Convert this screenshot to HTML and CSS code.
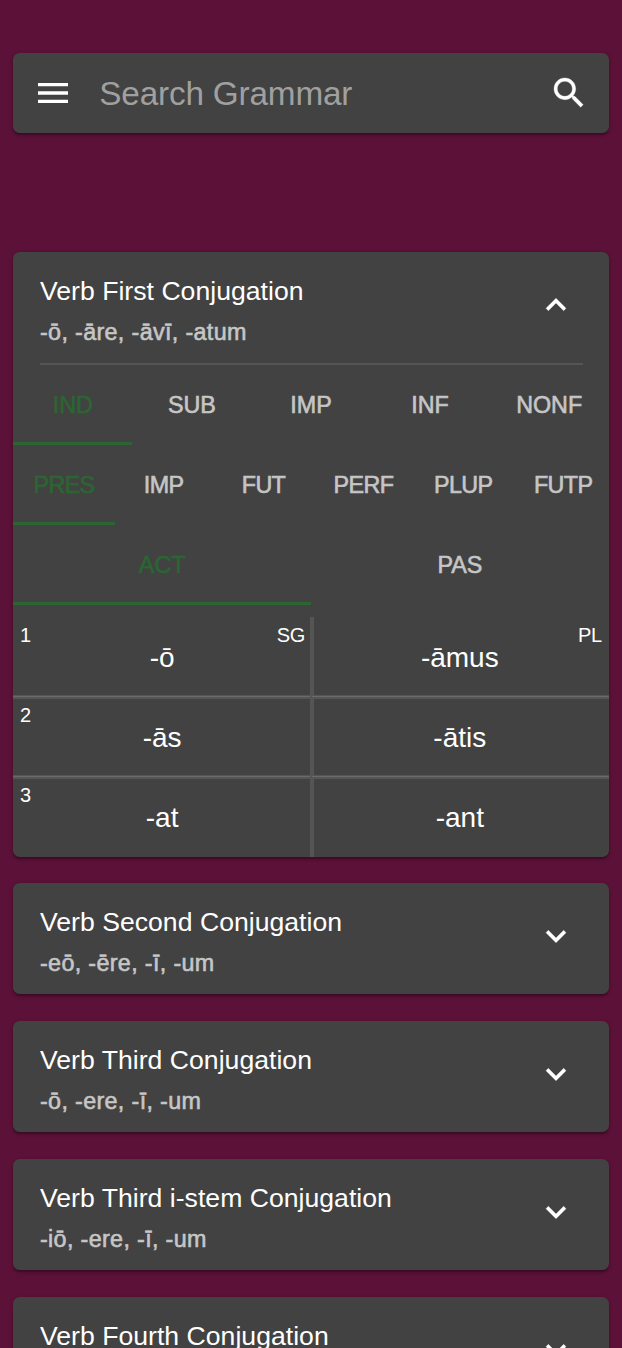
FILE: index.html
```html
<!DOCTYPE html>
<html lang="en">
<head>
<meta charset="utf-8">
<title>Grammar</title>
<link rel="stylesheet" href="styles.css">
</head>
<body>
<header class="search card">
  <svg class="icon" viewBox="0 0 24 24"><path d="M3 18h18v-2H3v2zm0-5h18v-2H3v2zm0-7v2h18V6H3z"/></svg>
  <span class="placeholder">Search Grammar</span>
  <svg class="icon bold" viewBox="0 0 24 24"><path d="M15.5 14h-.79l-.28-.27C15.41 12.59 16 11.11 16 9.5 16 5.91 13.09 3 9.5 3S3 5.91 3 9.5 5.91 16 9.5 16c1.61 0 3.09-.59 4.23-1.57l.27.28v.79l5 4.99L20.49 19l-4.99-5zm-6 0C7.01 14 5 11.99 5 9.5S7.01 5 9.5 5 14 7.01 14 9.5 11.99 14 9.5 14z"/></svg>
</header>
<main class="list">
  <section class="card open">
    <div class="head">
      <div><h2 class="title">Verb First Conjugation</h2><p class="forms">-ō, -āre, -āvī, -atum</p></div>
      <svg class="icon bold" viewBox="0 0 24 24"><path d="M12 8l-6 6 1.41 1.41L12 10.83l4.59 4.58L18 14z"/></svg>
    </div>
    <div class="divider"></div>
    <nav class="tabs"><span class="tab active">IND</span><span class="tab">SUB</span><span class="tab">IMP</span><span class="tab">INF</span><span class="tab">NONF</span></nav>
    <nav class="tabs tenses"><span class="tab active">PRES</span><span class="tab">IMP</span><span class="tab">FUT</span><span class="tab">PERF</span><span class="tab">PLUP</span><span class="tab">FUTP</span></nav>
    <nav class="tabs"><span class="tab active">ACT</span><span class="tab">PAS</span></nav>
    <div class="endings">
      <div class="cell"><span class="person">1</span><span class="number">SG</span>-ō</div>
      <div class="cell"><span class="number">PL</span>-āmus</div>
      <div class="cell"><span class="person">2</span>-ās</div>
      <div class="cell">-ātis</div>
      <div class="cell"><span class="person">3</span>-at</div>
      <div class="cell">-ant</div>
    </div>
  </section>
  <section class="card">
    <div class="head">
      <div><h2 class="title">Verb Second Conjugation</h2><p class="forms">-eō, -ēre, -ī, -um</p></div>
      <svg class="icon bold" viewBox="0 0 24 24"><path d="M16.59 8.59L12 13.17 7.41 8.59 6 10l6 6 6-6z"/></svg>
    </div>
  </section>
  <section class="card">
    <div class="head">
      <div><h2 class="title">Verb Third Conjugation</h2><p class="forms">-ō, -ere, -ī, -um</p></div>
      <svg class="icon bold" viewBox="0 0 24 24"><path d="M16.59 8.59L12 13.17 7.41 8.59 6 10l6 6 6-6z"/></svg>
    </div>
  </section>
  <section class="card">
    <div class="head">
      <div><h2 class="title">Verb Third i-stem Conjugation</h2><p class="forms">-iō, -ere, -ī, -um</p></div>
      <svg class="icon bold" viewBox="0 0 24 24"><path d="M16.59 8.59L12 13.17 7.41 8.59 6 10l6 6 6-6z"/></svg>
    </div>
  </section>
  <section class="card">
    <div class="head">
      <div><h2 class="title">Verb Fourth Conjugation</h2></div>
      <svg class="icon bold" viewBox="0 0 24 24"><path d="M16.59 8.59L12 13.17 7.41 8.59 6 10l6 6 6-6z"/></svg>
    </div>
  </section>
</main>
</body>
</html>
```
FILE: styles.css
```css
* { box-sizing: border-box; }
html { background: #5c1138; }
body {
  margin: 0;
  height: 1348px;
  overflow: hidden;
  padding: 53.3px 13.3px 0;
  background: #5c1138;
  color: #fff;
  font-family: "Liberation Sans", Arial, sans-serif;
}
.card {
  background: #424242;
  border-radius: 6.6px;
  box-shadow: 0 1.7px 4px rgba(0,0,0,.16), 0 1.7px 1.7px rgba(0,0,0,.14), 0 3.3px 1.7px -1.7px rgba(0,0,0,.12);
}
.icon { width: 40px; height: 40px; fill: #fff; flex: none; }
.icon.bold { stroke: #fff; stroke-width: .2; }
.search {
  display: flex;
  align-items: center;
  height: 79.4px;
  padding: 0 20px;
}
.placeholder {
  flex: 1;
  margin-left: 26px;
  padding-top: 3px;
  font-size: 33.3px;
  letter-spacing: -.17px;
  line-height: 40px;
  color: #a0a0a0;
}
.list {
  display: flex;
  flex-direction: column;
  gap: 27px;
  margin-top: 119.6px;
}
.list .card { flex: none; }
.list .open { margin-bottom: -1px; overflow: hidden; }
.head {
  display: flex;
  justify-content: space-between;
  height: 110.8px;
  padding: 20px 33px 0 26.7px;
}
.head .icon { margin-top: 13px; }
.title {
  margin: 0;
  font-size: 26.6px;
  font-weight: 400;
  letter-spacing: .02px;
  line-height: 38px;
}
.forms {
  margin: 5px 0 0;
  font-size: 23.3px;
  letter-spacing: .35px;
  line-height: 35px;
  color: #c6c6c6;
  -webkit-text-stroke: .6px currentColor;
}
.divider { height: 1.7px; margin: 0 26.2px 0 26.6px; background: #555; }
.tabs { display: flex; height: 80px; }
.tab {
  flex: 1 1 0;
  display: flex;
  align-items: center;
  justify-content: center;
  font-size: 23.3px;
  color: #c6c6c6;
  border-bottom: 3.4px solid transparent;
  padding-top: 5px;
  -webkit-text-stroke: .6px currentColor;
}
.tab.active { color: #2b6632; border-color: #2b6632; }
.tenses .tab { flex: none; width: 99.9px; letter-spacing: -.6px; }
.tenses .tab.active { width: 101.4px; }
.tenses .tab:not(.active) { padding-right: 2px; }
.endings {
  display: grid;
  grid-template-columns: 298.6px 1fr;
  grid-auto-rows: 80px;
  margin-top: 12.4px;
}
.cell {
  position: relative;
  display: flex;
  align-items: center;
  justify-content: center;
  padding: 2px 1px 0 0;
  font-size: 28px;
}
/* Row rule: a light centre between two dimmer edges. */
.cell:nth-child(-n+4)::after {
  content: "";
  position: absolute;
  left: 0;
  right: 0;
  bottom: -1.8px;
  height: 4px;
  background: linear-gradient(#555 1px, #6b6b6b 1px, #6b6b6b 2px, #555 2px);
}
.cell:nth-child(even)::before {
  content: "";
  position: absolute;
  left: -2px;
  top: 0;
  bottom: 0;
  width: 4px;
  background: #555;
}
.person, .number { position: absolute; top: 6px; font-size: 20px; line-height: 24px; letter-spacing: -.2px; }
.person { left: 6.7px; }
.number { right: 6.7px; }
```
